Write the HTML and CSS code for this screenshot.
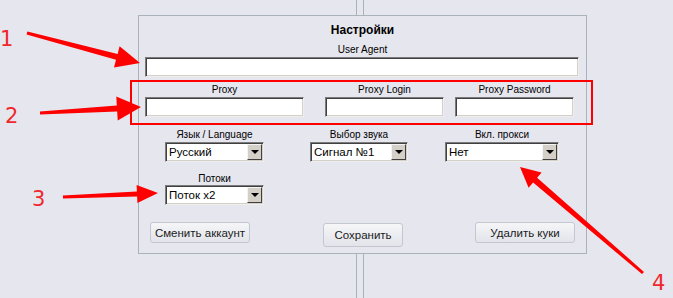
FILE: index.html
```html
<!DOCTYPE html>
<html lang="ru">
<head>
    <meta charset="UTF-8">
    <meta name="viewport" content="width=device-width, initial-scale=1.0">
    <title>Настройки</title>
    <link rel="stylesheet" href="styles.css">
</head>
<body>

<div id="settings">
    <div class="title">Настройки</div>

    <div class="uaField">
        <label for="userAgent">User Agent</label>
        <input type="text" id="userAgent" class="uaInput">
    </div>

    <div class="row proxyRow">
        <div class="field proxyMain">
            <label for="proxy">Proxy</label>
            <input type="text" id="proxy">
        </div>
        <div class="field proxyLogin">
            <label for="proxyLogin">Proxy Login</label>
            <input type="text" id="proxyLogin">
        </div>
        <div class="field proxyPass">
            <label for="proxyPassword">Proxy Password</label>
            <input type="text" id="proxyPassword">
        </div>
    </div>

    <div class="row comboRow">
        <div class="field langField">
            <label>Язык / Language</label>
            <div class="combo"><span class="comboValue">Русский</span><span class="comboBtn"></span></div>
        </div>
        <div class="field soundField">
            <label>Выбор звука</label>
            <div class="combo"><span class="comboValue">Сигнал №1</span><span class="comboBtn"></span></div>
        </div>
        <div class="field proxyOnField">
            <label>Вкл. прокси</label>
            <div class="combo"><span class="comboValue">Нет</span><span class="comboBtn"></span></div>
        </div>
    </div>

    <div class="row threadsRow">
        <div class="field langField">
            <label>Потоки</label>
            <div class="combo"><span class="comboValue">Поток x2</span><span class="comboBtn"></span></div>
        </div>
    </div>

    <div class="row buttonRow">
        <button type="button" class="btn btnAccount">Сменить аккаунт</button>
        <button type="button" class="btn btnSave">Сохранить</button>
        <button type="button" class="btn btnCookies">Удалить куки</button>
    </div>
</div>

<svg class="notes" width="673" height="298" viewBox="0 0 673 298">
    <rect x="131" y="81" width="461" height="43" fill="none" stroke="#ff0000" stroke-width="2"/>
    <polygon points="27.4,31.5 117.6,53.9 119.6,46.2 140,63 114,67.4 116,59.7 26.6,34.5"/>
    <polygon points="39.9,111.5 116.8,105.4 116.3,96.4 141,107 117.7,120.4 117.2,111.4 40.1,114.5"/>
    <polygon points="62.9,195.5 136.9,191.4 136.6,185 158,193 137.4,203 137.1,196.4 63.1,198.5"/>
    <polygon points="644,271.9 537.1,177.8 541.6,172.5 520,167 528.6,187.7 533.1,182.4 642,274.1"/>
    <text x="0" y="46">1</text>
    <text x="5" y="123">2</text>
    <text x="32" y="206">3</text>
    <text x="652" y="290">4</text>
</svg>

</body>
</html>
```

FILE: styles.css
```css
* {
    box-sizing: border-box;
}

body {
    margin: 0;
    height: 298px;
    overflow: hidden;
    position: relative;
    font-family: "Liberation Sans", Arial, sans-serif;
    color: #000;
    background-color: #e6e6ee;
    /* splitter lines behind the settings box */
    background-image: linear-gradient(to right,
        transparent 356px, #a9b3bc 356px, #a9b3bc 357px, transparent 357px,
        transparent 363px, #a9b3bc 363px, #a9b3bc 364px, transparent 364px);
}

#settings {
    margin: 15px 0 0 138px;
    width: 449px;
    height: 239px;
    border: 1px solid #a9b3bc;
    background-color: #e6e6ee;
}

.title {
    margin-top: 7px;
    height: 15px;
    line-height: 15px;
    text-align: center;
    font-size: 12px;
    font-weight: bold;
}

label {
    display: block;
    height: 13px;
    padding-top: 1px;
    line-height: 12px;
    font-size: 10px;
    text-align: center;
    white-space: nowrap;
}

input {
    display: block;
    height: 20px;
    margin: 1px 0 0 0;
    padding: 0 3px;
    background: #fff;
    border: 1px solid;
    border-color: #7b7b7b #eeeeee #eeeeee #7b7b7b;
    box-shadow: inset 1px 1px 0 #404040, inset -1px -1px 0 #d4d0c8;
    outline: none;
}

.uaField {
    margin-top: 5px;
}

.uaInput {
    margin-left: 6px;
    width: 434px;
}

.row {
    display: flex;
    align-items: flex-start;
}

.field {
    display: flex;
    flex-direction: column;
}

.field input {
    width: 100%;
}

.proxyRow {
    margin-top: 6px;
    padding-left: 6px;
}

.proxyMain {
    width: 159px;
}

.proxyLogin {
    width: 119px;
    margin-left: 21px;
}

.proxyPass {
    width: 119px;
    margin-left: 11px;
}

.comboRow {
    margin-top: 11px;
    padding-left: 26px;
}

.langField {
    width: 99px;
}

.soundField {
    width: 98px;
    margin-left: 46px;
}

.proxyOnField {
    width: 114px;
    margin-left: 37px;
}

.combo {
    display: flex;
    height: 20px;
    margin-top: 1px;
    background: #fff;
    border: 1px solid;
    border-color: #7b7b7b #eeeeee #eeeeee #7b7b7b;
    box-shadow: inset 1px 1px 0 #404040, inset -1px -1px 0 #d4d0c8;
    padding: 1px;
}

.comboValue {
    flex: 1;
    padding-left: 2px;
    font-size: 11.5px;
    line-height: 16px;
    white-space: nowrap;
    overflow: hidden;
}

.comboBtn {
    position: relative;
    width: 15px;
    height: 16px;
    background: #d4d0c8;
    border: 1px solid;
    border-color: #f4f4f4 #404040 #404040 #f4f4f4;
}

.comboBtn::after {
    content: "";
    position: absolute;
    left: 3px;
    top: 5px;
    border-left: 4px solid transparent;
    border-right: 4px solid transparent;
    border-top: 4px solid #000;
}

.threadsRow {
    margin-top: 10px;
    padding-left: 26px;
}

.threadsRow .combo {
    margin-top: 0;
}

.buttonRow {
    margin-top: 17px;
    padding-left: 11px;
}

.btn {
    height: 21px;
    padding: 0;
    font-family: "Liberation Sans", Arial, sans-serif;
    font-size: 11.5px;
    color: #1a1a1a;
    background: linear-gradient(#f6f6f8, #e2e4ea);
    border: 1px solid #c3c7d0;
    border-radius: 3px;
    cursor: pointer;
}

.btnAccount {
    width: 100px;
}

.btnSave {
    width: 80px;
    height: 24px;
    margin: 1px 0 0 73px;
}

.btnCookies {
    width: 100px;
    margin-left: 72px;
}

.notes {
    position: absolute;
    left: 0;
    top: 0;
    pointer-events: none;
}

.notes polygon {
    fill: #ff0000;
}

.notes text {
    font-family: "DejaVu Sans", sans-serif;
    font-size: 21px;
    fill: #f0282d;
}
```
